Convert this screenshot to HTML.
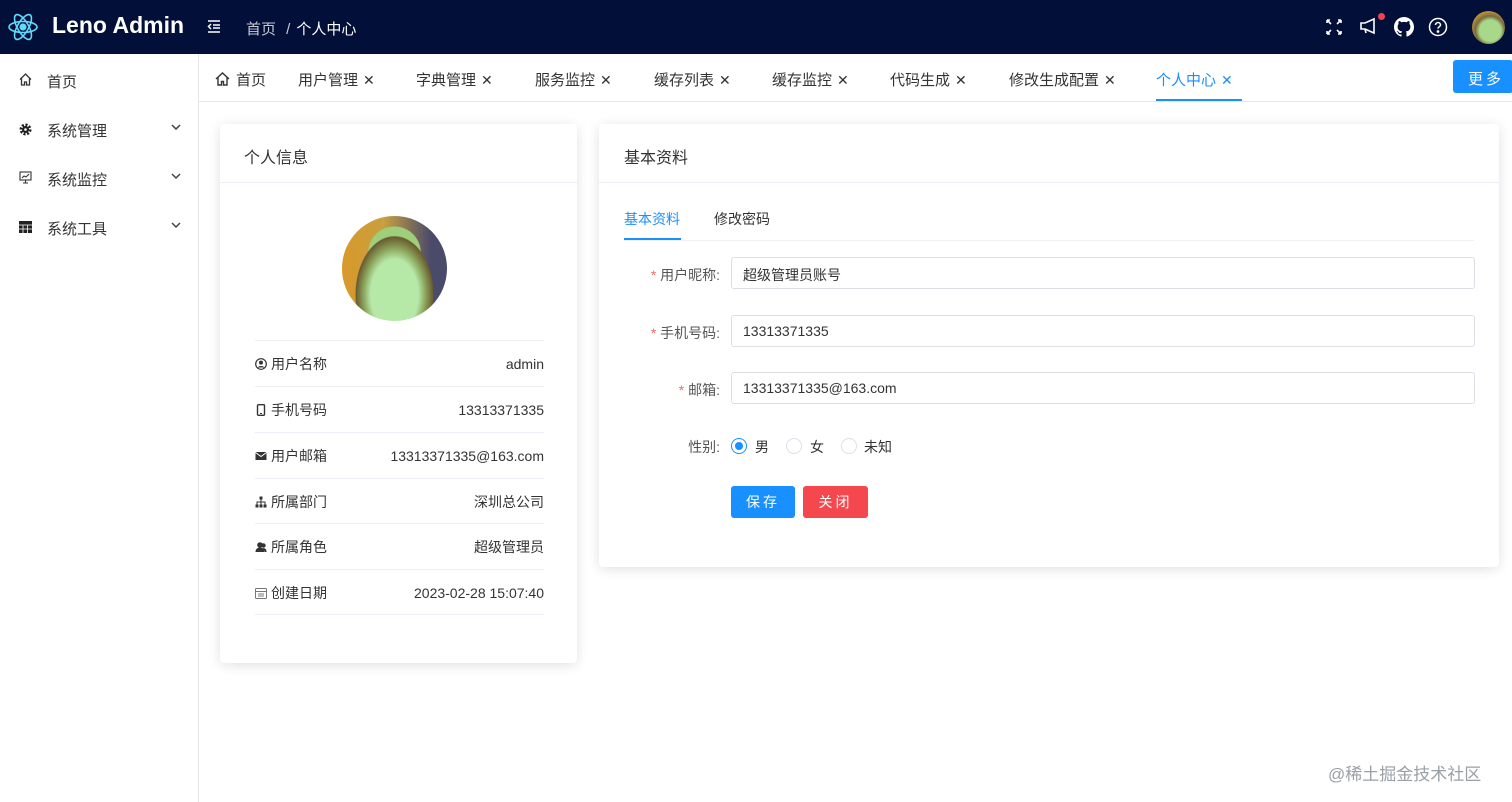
<!DOCTYPE html>
<html><head><meta charset="utf-8"><style>
*{box-sizing:border-box;margin:0;padding:0}
body{width:1512px;height:802px;overflow:hidden;background:#fff;font-family:"Liberation Sans","Noto Sans CJK SC",sans-serif;font-size:14px;color:#333;position:relative}
.hdr{position:absolute;left:0;top:0;width:1512px;height:54px;background:#020f38;color:#fff}
.abs{position:absolute}
.side{position:absolute;left:0;top:54px;width:199px;height:748px;border-right:1px solid #e8e8e8}
.side .it{position:absolute;left:0;width:198px;height:49px;font-size:15px;color:#333}
.side .it span{position:absolute;left:47px;top:15px}
.side .chev{position:absolute;left:171px;top:19px}
.tabs{position:absolute;left:199px;top:54px;width:1313px;height:48px;border-bottom:1px solid #e8e8e8}
.tab{position:absolute;top:15px;font-size:15px;color:#333;white-space:nowrap}
.tab i{font-style:normal;font-size:14px;margin-left:5px}
.card{position:absolute;background:#fff;border-radius:4px;box-shadow:0 2px 12px rgba(0,0,0,.12)}
.row{position:absolute;left:35px;width:289px;height:46px;border-top:1px solid #ebeef5;font-size:14px}
.row .l{position:absolute;left:0;top:13px;line-height:20px;color:#333;display:flex;align-items:center;gap:4px}
.row .r{position:absolute;right:0;top:13px;line-height:20px;color:#333}
.lab{position:absolute;font-size:14px;color:#555;text-align:right;width:120px}
.lab b{color:#f56c6c;font-weight:normal}
.inp{position:absolute;left:731px;width:744px;height:32px;border:1px solid #dcdfe6;border-radius:3px;padding:7px 11px;font-size:14px;color:#333}
.radio{position:absolute;width:16px;height:16px;border:1px solid #dcdfe6;border-radius:50%}
</style></head><body>
<div class="hdr">
<svg class="abs" style="left:7px;top:11px" width="32" height="32" viewBox="-16 -16 32 32" fill="none" stroke="#61dafb" stroke-width="1.6"><ellipse rx="14" ry="5.5"/><ellipse rx="14" ry="5.5" transform="rotate(60)"/><ellipse rx="14" ry="5.5" transform="rotate(120)"/><circle r="2.8" fill="#61dafb"/></svg>
<div class="abs" style="left:52px;top:12px;font-size:23px;font-weight:bold">Leno Admin</div>
<svg class="abs" style="left:207px;top:20px" width="14" height="13" viewBox="0 0 14 13" stroke="#fff" stroke-width="1.5" fill="none"><path d="M1 1h12M6 5h7M6 8h7M1 12h12M4 4L1.5 6.5 4 9"/></svg>
<div class="abs" style="left:246px;top:18px;font-size:15px;color:#c8cbd6">首页 <span style="margin:0 6px">/</span><span style="color:#fff">个人中心</span></div>
<svg class="abs" style="left:1326px;top:19px" width="16" height="16" viewBox="0 0 16 16" stroke="#fff" stroke-width="1.6" fill="none"><path d="M1 1l4 4M1 1h3M1 1v3M15 1l-4 4M15 1h-3M15 1v3M1 15l4-4M1 15h3M1 15v-3M15 15l-4-4M15 15h-3M15 15v-3"/></svg>
<svg class="abs" style="left:1359px;top:17px" width="20" height="18" viewBox="0 0 20 18" stroke="#fff" stroke-width="1.6" fill="none"><path d="M2 6h4l9-4v14l-9-4H2z M6 12l1 4"/></svg>
<div class="abs" style="left:1378px;top:13px;width:7px;height:7px;border-radius:50%;background:#f5444b"></div>
<svg class="abs" style="left:1394px;top:17px" width="20" height="20" viewBox="0 0 16 16" fill="#fff"><path d="M8 0C3.58 0 0 3.58 0 8c0 3.54 2.290 6.53 5.47 7.59.4.07.55-.17.55-.38v-1.33c-2.230.48-2.7-1.07-2.7-1.07-.36-.92-.89-1.17-.89-1.17-.73-.5.05-.49.05-.49.8.06 1.230.83 1.230.83.71 1.220 1.870.87 2.330.66.07-.52.28-.87.51-1.07-1.780-.2-3.650-.89-3.650-3.950 0-.87.31-1.590.82-2.150-.08-.2-.36-1.020.08-2.120 0 0 .67-.21 2.200.82a7.6 7.6 0 014 0c1.530-1.040 2.200-.82 2.200-.82.44 1.100.16 1.920.08 2.120.51.56.82 1.270.82 2.150 0 3.070-1.870 3.750-3.650 3.950.29.25.54.73.54 1.480v2.200c0 .21.15.46.55.38A8.01 8.01 0 0016 8c0-4.420-3.580-8-8-8z"/></svg>
<svg class="abs" style="left:1428px;top:17px" width="20" height="20" viewBox="0 0 20 20" fill="none" stroke="#fff" stroke-width="1.5"><circle cx="10" cy="10" r="8.5"/><path d="M7.5 8a2.5 2.5 0 115 0c0 1.7-2.5 1.8-2.5 3.6"/><circle cx="10" cy="14.5" r=".6" fill="#fff"/></svg>
<div class="abs" style="left:1472px;top:11px;width:33px;height:33px;border-radius:50%;background:radial-gradient(circle at 55% 60%,#a8d88a 0 40%,#7b6a3a 55%,#d9a23a 80%)"></div>
</div>
<div class="side">
<div class="it" style="top:2px"><svg class="abs" style="left:19px;top:17px" width="13" height="13" viewBox="0 0 13 13" fill="none" stroke="#333" stroke-width="1.3"><path d="M1 6.5L6.5 1 12 6.5M2.5 5v7h3V9h2v3h3V5"/></svg><span>首页</span></div>
<div class="it" style="top:51px"><svg class="abs" style="left:19px;top:18px" width="13" height="13" viewBox="0 0 13 13"><circle cx="6.5" cy="6.5" r="4.5" fill="none" stroke="#222" stroke-width="3" stroke-dasharray="2 1.5"/><circle cx="6.5" cy="6.5" r="3.5" fill="#222"/><circle cx="6.5" cy="6.5" r="1.3" fill="#fff"/></svg><span>系统管理</span><svg class="chev" width="10" height="6" viewBox="0 0 10 6" fill="none" stroke="#444" stroke-width="1.5"><path d="M1 1l4 4 4-4"/></svg></div>
<div class="it" style="top:100px"><svg class="abs" style="left:19px;top:17px" width="13" height="13" viewBox="0 0 13 13" fill="none" stroke="#333" stroke-width="1.1"><rect x="1" y="1" width="11" height="8"/><path d="M3 7l2-2 2 1 3-3M6.5 9v3M4 12h5"/></svg><span>系统监控</span><svg class="chev" width="10" height="6" viewBox="0 0 10 6" fill="none" stroke="#444" stroke-width="1.5"><path d="M1 1l4 4 4-4"/></svg></div>
<div class="it" style="top:149px"><svg class="abs" style="left:19px;top:18px" width="13" height="12" viewBox="0 0 13 12"><rect width="13" height="12" fill="#222"/><path d="M0 4h13M0 8h13M4 4v8M8.5 4v8" stroke="#fff" stroke-width=".8"/></svg><span>系统工具</span><svg class="chev" width="10" height="6" viewBox="0 0 10 6" fill="none" stroke="#444" stroke-width="1.5"><path d="M1 1l4 4 4-4"/></svg></div>
</div>
<div class="tabs">
<svg class="abs" style="left:16px;top:18px" width="15" height="14" viewBox="0 0 15 14" fill="none" stroke="#333" stroke-width="1.4"><path d="M1 7L7.5 1 14 7M3 5.5V13h3.5V9.5h2V13H12V5.5"/></svg>
<div class="tab" style="left:37px">首页</div>
<div class="tab" style="left:99px">用户管理<i>✕</i></div>
<div class="tab" style="left:217px">字典管理<i>✕</i></div>
<div class="tab" style="left:336px">服务监控<i>✕</i></div>
<div class="tab" style="left:455px">缓存列表<i>✕</i></div>
<div class="tab" style="left:573px">缓存监控<i>✕</i></div>
<div class="tab" style="left:691px">代码生成<i>✕</i></div>
<div class="tab" style="left:810px">修改生成配置<i>✕</i></div>
<div class="tab" style="left:957px;color:#1890ff">个人中心<i>✕</i></div>
<div class="abs" style="left:957px;top:45px;width:86px;height:2px;background:#1890ff"></div>
<div class="abs" style="left:1254px;top:6px;width:60px;height:33px;background:#1890ff;border-radius:3px;color:#fff;font-size:15px;padding:8px 0 0 15px;letter-spacing:3px">更多</div>
</div>
<div class="card" style="left:220px;top:124px;width:357px;height:539px">
<div class="abs" style="left:24px;top:20px;font-size:16px;color:#333">个人信息</div>
<div class="abs" style="left:0;top:58px;width:357px;border-top:1px solid #ebeef5"></div>
<div class="abs" style="left:122px;top:92px;width:105px;height:105px;border-radius:50%;background:radial-gradient(ellipse at 50% 75%,#b6e8a8 0 32%,#8aa35a 42%,#6a5a30 52%,transparent 53%),radial-gradient(circle at 50% 35%,#9fcf7a 0 30%,transparent 31%),linear-gradient(90deg,#d9982a,#c7a040 40%,#4a4a6a 85%)"></div>
<div class="row" style="top:216px"><div class="l"><svg width="12" height="12" viewBox="0 0 12 12"><circle cx="6" cy="6" r="5.3" fill="none" stroke="#333" stroke-width="1.2"/><circle cx="6" cy="4.6" r="2" fill="#333"/><path d="M2.5 9.5a4 3 0 017 0z" fill="#333"/></svg>用户名称</div><div class="r">admin</div></div>
<div class="row" style="top:262px"><div class="l"><svg width="12" height="12" viewBox="0 0 12 12"><rect x="2.5" y="0.7" width="7" height="10.6" rx="1" fill="none" stroke="#333" stroke-width="1.4"/><rect x="5" y="9" width="2" height="1" fill="#333"/></svg>手机号码</div><div class="r">13313371335</div></div>
<div class="row" style="top:308px"><div class="l"><svg width="12" height="12" viewBox="0 0 12 12"><rect x="0.5" y="2" width="11" height="8" fill="#333"/><path d="M0.5 2.5l5.5 4 5.5-4" stroke="#fff" stroke-width="1" fill="none"/></svg>用户邮箱</div><div class="r">13313371335@163.com</div></div>
<div class="row" style="top:354px"><div class="l"><svg width="12" height="12" viewBox="0 0 12 12" fill="#333"><rect x="4.5" y="0.5" width="3" height="3"/><rect x="0.5" y="8.5" width="3" height="3"/><rect x="4.5" y="8.5" width="3" height="3"/><rect x="8.5" y="8.5" width="3" height="3"/><path d="M6 3.5v5M2 8.5V6h8v2.5" stroke="#333" fill="none"/></svg>所属部门</div><div class="r">深圳总公司</div></div>
<div class="row" style="top:399px"><div class="l"><svg width="12" height="12" viewBox="0 0 12 12" fill="#333"><circle cx="5" cy="4" r="2.8"/><path d="M0.5 11c0-3 2-4.5 4.5-4.5S9.5 8 9.5 11z"/><circle cx="8.5" cy="4.5" r="2.2"/><path d="M8 7c2 0 3.5 1 3.5 4H10z"/></svg>所属角色</div><div class="r">超级管理员</div></div>
<div class="row" style="top:445px;border-bottom:1px solid #ebeef5"><div class="l"><svg width="12" height="12" viewBox="0 0 12 12" fill="none" stroke="#777" stroke-width="1"><rect x="0.5" y="1.5" width="11" height="10" rx="1"/><path d="M0.5 4.5h11M3 7h6M3 9h6"/></svg>创建日期</div><div class="r">2023-02-28 15:07:40</div></div>
</div>
<div class="card" style="left:599px;top:124px;width:900px;height:443px">
<div class="abs" style="left:25px;top:20px;font-size:16px;color:#333">基本资料</div>
<div class="abs" style="left:0;top:58px;width:900px;border-top:1px solid #ebeef5"></div>
<div class="abs" style="left:25px;top:85px;color:#1890ff">基本资料</div>
<div class="abs" style="left:115px;top:85px;color:#333">修改密码</div>
<div class="abs" style="left:25px;top:114px;width:57px;height:2px;background:#1890ff"></div>
<div class="abs" style="left:25px;top:116px;width:850px;border-top:1px solid #f0f0f0"></div>
</div>
<div class="lab" style="left:600px;top:265px"><b>*</b> 用户昵称:</div>
<div class="lab" style="left:600px;top:323px"><b>*</b> 手机号码:</div>
<div class="lab" style="left:600px;top:380px"><b>*</b> 邮箱:</div>
<div class="lab" style="left:600px;top:437px">性别:</div>
<div class="inp" style="top:257px">超级管理员账号</div>
<div class="inp" style="top:315px">13313371335</div>
<div class="inp" style="top:372px">13313371335@163.com</div>
<div class="radio" style="left:731px;top:438px;border-color:#1890ff"><div style="width:8px;height:8px;border-radius:50%;background:#1890ff;margin:3px"></div></div>
<div class="abs" style="left:755px;top:437px">男</div>
<div class="radio" style="left:786px;top:438px"></div>
<div class="abs" style="left:810px;top:437px">女</div>
<div class="radio" style="left:841px;top:438px"></div>
<div class="abs" style="left:864px;top:437px">未知</div>
<div class="abs" style="left:731px;top:486px;width:64px;height:32px;background:#1890ff;border-radius:3px;color:#fff;text-align:center;line-height:32px;letter-spacing:3px">保存</div>
<div class="abs" style="left:803px;top:486px;width:65px;height:32px;background:#f5484e;border-radius:3px;color:#fff;text-align:center;line-height:32px;letter-spacing:3px">关闭</div>
<div class="abs" style="left:1328px;top:760px;font-size:17px;color:#9aa0a8">@稀土掘金技术社区</div>
</body></html>
